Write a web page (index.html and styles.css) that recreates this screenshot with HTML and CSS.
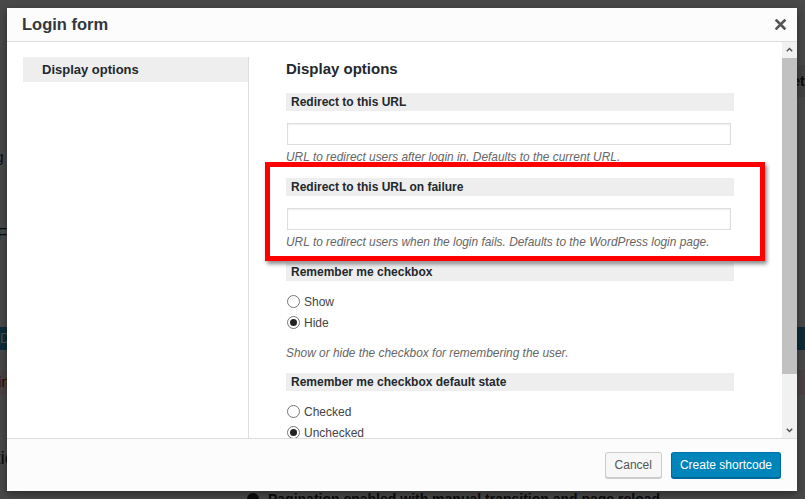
FILE: index.html
```html
<!DOCTYPE html>
<html lang="en">
<head>
	<meta charset="UTF-8">
	<title>Login form</title>
	<link rel="stylesheet" href="styles.css">
</head>
<body>
	<div class="page">
		<div class="page-tab"><span>Settings</span></div>
		<div class="page-line">ng</div>
		<div class="page-line second">Fi</div>
		<div class="page-notice">Display</div>
		<div class="page-error">Login</div>
		<div class="page-big">Pagination</div>
		<div class="page-radio"><span class="dot"></span>Pagination enabled with manual transition and page reload</div>
	</div>
	<div class="overlay"></div>

	<div class="modal">
		<div class="modal-head">
			<h1>Login form</h1>
			<svg class="close" width="11" height="11" viewBox="0 0 11 11">
				<path d="M1.5 1.5 L9.5 9.5 M9.5 1.5 L1.5 9.5" stroke="#555" stroke-width="2.6" stroke-linecap="square"/>
			</svg>
		</div>

		<div class="modal-body">
			<div class="sidebar">
				<div class="tab">Display options</div>
			</div>

			<div class="content">
				<h2>Display options</h2>

				<div class="field">
					<div class="field-title">Redirect to this URL</div>
					<input type="text">
					<p class="desc">URL to redirect users after login in. Defaults to the current URL.</p>
				</div>

				<div class="field">
					<div class="field-title">Redirect to this URL on failure</div>
					<input type="text">
					<p class="desc">URL to redirect users when the login fails. Defaults to the WordPress login page.</p>
				</div>

				<div class="field options">
					<div class="field-title">Remember me checkbox</div>
					<label class="radio"><input type="radio" name="rm">Show</label>
					<label class="radio"><input type="radio" name="rm" checked>Hide</label>
					<p class="desc">Show or hide the checkbox for remembering the user.</p>
				</div>

				<div class="field options">
					<div class="field-title">Remember me checkbox default state</div>
					<label class="radio"><input type="radio" name="st">Checked</label>
					<label class="radio"><input type="radio" name="st" checked>Unchecked</label>
				</div>

				<div class="highlight"></div>
			</div>

			<div class="scrollbar">
				<div class="arrow">
					<svg width="7" height="5" viewBox="0 0 7 5"><path d="M0.8 4.2 L3.5 1.4 L6.2 4.2" fill="none" stroke="#505050" stroke-width="1.4"/></svg>
				</div>
				<div class="thumb"></div>
				<div class="track"></div>
				<div class="arrow">
					<svg width="7" height="5" viewBox="0 0 7 5"><path d="M0.8 0.8 L3.5 3.6 L6.2 0.8" fill="none" stroke="#505050" stroke-width="1.4"/></svg>
				</div>
			</div>
		</div>

		<div class="modal-foot">
			<button class="btn">Cancel</button>
			<button class="btn btn-primary">Create shortcode</button>
		</div>
	</div>
</body>
</html>
```

FILE: styles.css
```css
html, body {
	width: 100%;
	height: 100%;
	margin: 0;
	padding: 0;
}

body {
	position: relative;
	overflow: hidden;
	background: #f1f1f1;
	font-family: "Liberation Sans", Arial, sans-serif;
	color: #23282d;
}

/* admin page behind the dialog */
.page {
	height: 100%;
	padding-top: 20px;
	box-sizing: border-box;
}
.page-tab {
	display: flex;
	justify-content: flex-end;
	margin-top: 45px;
}
.page-tab span {
	width: 60px;
	height: 32px;
	margin-right: -38px;
	line-height: 32px;
	background: #ddd;
	font-size: 14px;
	font-weight: bold;
	overflow: hidden;
}
.page-line {
	margin: 52px 0 0 -12px;
	font-size: 14px;
	color: #23282d;
}
.page-line.second {
	margin-top: 60px;
	margin-left: -3px;
	font-size: 17px;
}
.page-notice {
	height: 23px;
	margin-top: 82px;
	line-height: 23px;
	background: #2b93bf;
	color: #fff;
	font-size: 14px;
}
.page-error {
	height: 25px;
	margin-top: 20px;
	line-height: 25px;
	background: #f7dede;
	color: #a00;
	font-size: 14px;
	text-indent: -25px;
}
.page-big {
	margin-top: 52px;
	font-size: 19px;
	text-indent: -64px;
}
.page-radio {
	display: flex;
	align-items: center;
	gap: 9px;
	margin: 22px 0 0 247px;
	font-size: 14px;
	font-weight: bold;
}
.page-radio .dot {
	width: 8px;
	height: 8px;
	border: 2px solid #222;
	border-radius: 50%;
	background: #222;
}

.overlay {
	position: absolute;
	left: 0;
	top: 0;
	right: 0;
	bottom: 0;
	background: rgba(0,0,0,.7);
}

/* dialog */
.modal {
	position: absolute;
	left: 7px;
	top: 8px;
	width: 790px;
	height: 483px;
	display: flex;
	flex-direction: column;
	background: #fff;
	box-shadow: 0 3px 8px rgba(0,0,0,.4);
}

.modal-head {
	flex: none;
	height: 33px;
	display: flex;
	align-items: center;
	justify-content: space-between;
	padding: 0 11px 0 15px;
	background: #fcfcfc;
	border-bottom: 1px solid #ddd;
}
.modal-head h1 {
	margin: 0;
	font-size: 16.5px;
	font-weight: bold;
	color: #32373c;
}

.modal-body {
	flex: 1;
	min-height: 0;
	display: flex;
}

.sidebar {
	flex: none;
	width: 225px;
	margin: 15px 0 0 16px;
	border-right: 1px solid #ddd;
}
.tab {
	height: 25px;
	line-height: 25px;
	padding-left: 19px;
	background: #eee;
	font-size: 13px;
	font-weight: bold;
}

.content {
	position: relative;
	flex: 1;
	overflow: hidden;
	padding: 18px 0 0 37px;
}
.content h2 {
	margin: 0 0 15px;
	font-size: 15px;
	line-height: 18px;
}

.field {
	margin-bottom: 13px;
}
.field.options {
	margin-bottom: 12px;
}
.field-title {
	width: 443px;
	height: 18px;
	line-height: 18px;
	padding-left: 5px;
	background: #eee;
	font-size: 12px;
	font-weight: bold;
}
.field input[type=text] {
	display: block;
	width: 444px;
	height: 22px;
	margin: 12px 0 0 1px;
	box-sizing: border-box;
	border: 1px solid #ddd;
	box-shadow: inset 0 1px 2px rgba(0,0,0,.07);
}
.desc {
	margin: 4px 0 0;
	font-size: 11.9px;
	line-height: 16px;
	font-style: italic;
	color: #666;
}
.options .desc {
	margin-top: 12px;
}

.radio {
	display: flex;
	align-items: center;
	gap: 4px;
	height: 21px;
	padding-left: 1px;
	font-size: 12px;
	color: #444;
}
.field-title + .radio {
	margin-top: 10px;
}
.radio input {
	appearance: none;
	-webkit-appearance: none;
	position: relative;
	width: 13px;
	height: 13px;
	margin: 0;
	border: 1px solid #777;
	border-radius: 50%;
	background: #fff;
}
.radio input:checked::before {
	content: "";
	position: absolute;
	left: 2px;
	top: 2px;
	width: 7px;
	height: 7px;
	border-radius: 50%;
	background: #222;
}

/* annotation drawn over the form */
.highlight {
	position: absolute;
	left: 16px;
	top: 120px;
	width: 500px;
	height: 99px;
	box-sizing: border-box;
	border: 5px solid #f00;
	box-shadow: 2px 3px 4px rgba(0,0,0,.45);
}

.scrollbar {
	flex: none;
	width: 15px;
	display: flex;
	flex-direction: column;
	background: #f1f1f1;
}
.scrollbar .arrow {
	height: 15px;
	display: flex;
	align-items: center;
	justify-content: center;
}
.scrollbar .thumb {
	height: 316px;
	margin-top: 1px;
	background: #c1c1c1;
}
.scrollbar .track {
	flex: 1;
}

.modal-foot {
	flex: none;
	height: 52px;
	display: flex;
	align-items: center;
	justify-content: flex-end;
	gap: 9px;
	padding-right: 16px;
	background: #fcfcfc;
	border-top: 1px solid #ddd;
}

.btn {
	height: 26px;
	padding: 0 9px;
	border: 1px solid #ccc;
	border-radius: 3px;
	background: #f7f7f7;
	box-shadow: 0 1px 0 #ccc;
	font-family: inherit;
	font-size: 12px;
	color: #555;
}
.btn-primary {
	padding: 0 8px;
	background: #0085ba;
	border-color: #0073aa #006799 #006799;
	box-shadow: 0 1px 0 #006799;
	color: #fff;
}
```
